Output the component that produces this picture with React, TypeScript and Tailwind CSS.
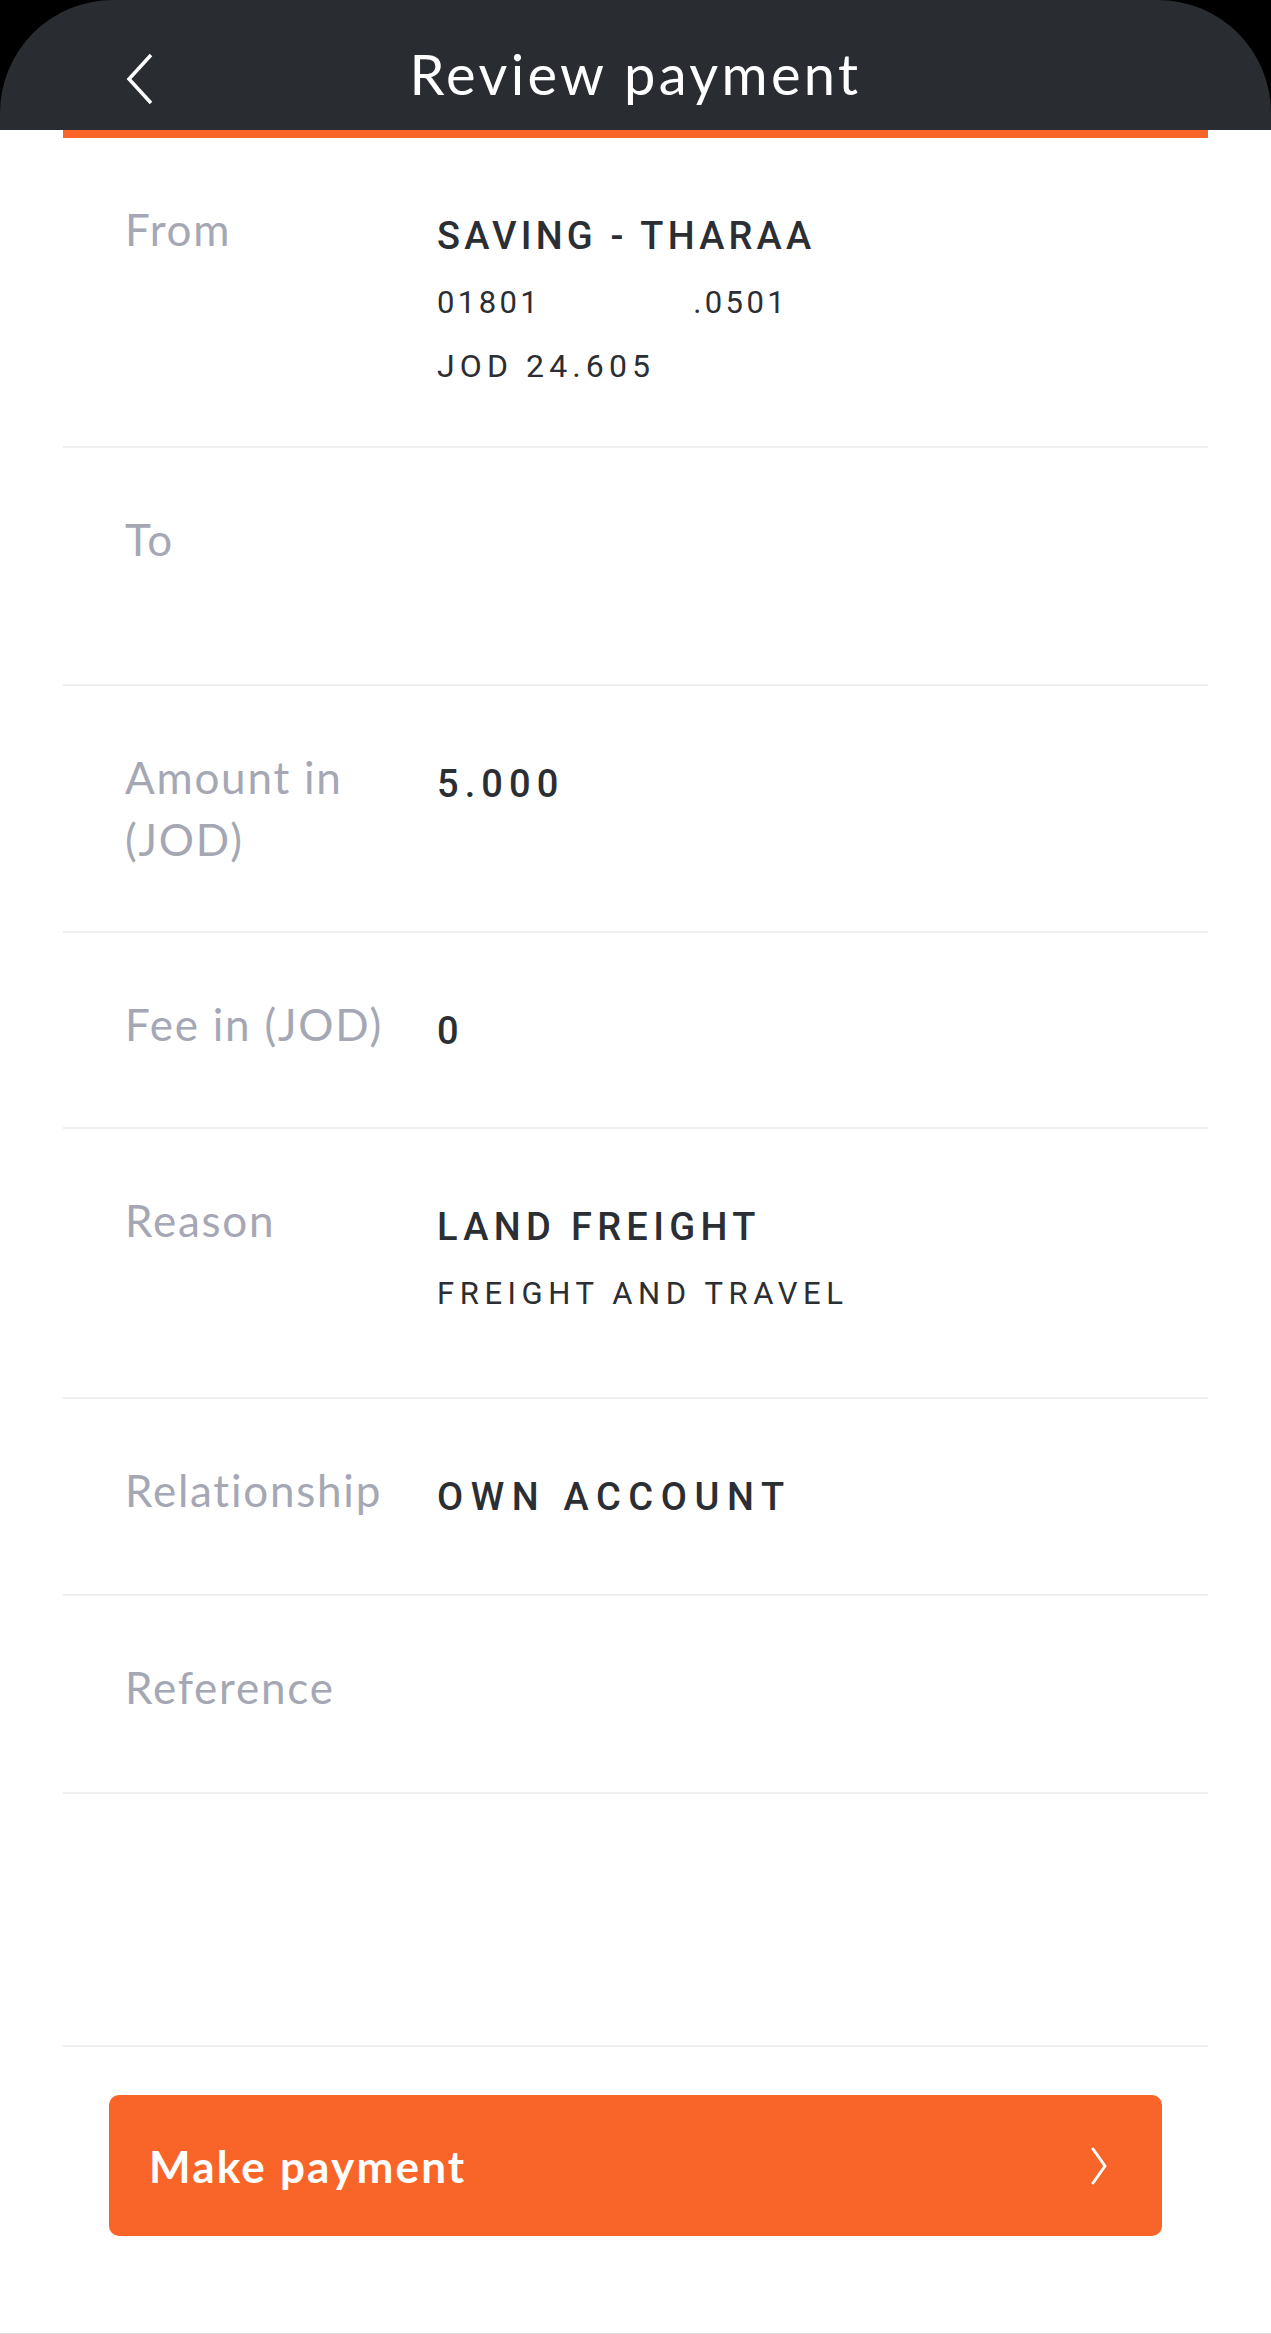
import React from "react";

const LABEL_FONT = { fontFamily: "Lato, 'Noto Sans', sans-serif" };
const VALUE_FONT = { fontFamily: "Roboto, 'Liberation Sans', sans-serif" };

function Row({
  label,
  heightClass,
  children,
}: {
  label: string;
  heightClass: string;
  children?: React.ReactNode;
}) {
  return (
    <div className={`mx-[63px] flex border-b-2 border-[#efeff2] pl-[62px] ${heightClass}`}>
      <div
        className="w-[312px] shrink-0 pr-[40px] pt-[60px] text-[44px] leading-[62px] tracking-[0.04em] text-[#a5a8b4]"
        style={LABEL_FONT}
      >
        {label}
      </div>
      <div className="flex flex-col pt-[67px] text-[#2b2e33]" style={VALUE_FONT}>
        {children}
      </div>
    </div>
  );
}

function Main({ children, trackingClass }: { children: React.ReactNode; trackingClass: string }) {
  return <div className={`text-[38px] font-medium leading-[62px] ${trackingClass}`}>{children}</div>;
}

function Sub({ children, trackingClass }: { children: React.ReactNode; trackingClass: string }) {
  return (
    <div className={`mt-[4px] text-[31px] font-normal leading-[64px] ${trackingClass}`}>{children}</div>
  );
}

export default function App() {
  return (
    <div className="flex h-[2334px] w-[1271px] flex-col overflow-hidden bg-black">
      <header className="relative grid h-[130px] shrink-0 grid-cols-[1fr_auto_1fr] items-start rounded-t-[113px] bg-[#292d31]">
        <div className="pl-[126px] pt-[53px]">
          <svg width="28" height="52" viewBox="0 0 28 52" fill="none">
            <path d="M25 2 L3 26 L25 50" stroke="#ffffff" strokeWidth="3.5" strokeLinejoin="miter" />
          </svg>
        </div>
        <h1
          className="pt-[46px] text-[56px] font-normal leading-[56px] tracking-[0.06em] text-white"
          style={LABEL_FONT}
        >
          Review payment
        </h1>
        <div />
      </header>

      <main className="flex flex-1 flex-col bg-white">
        <div className="mx-[63px] h-[8px] shrink-0 bg-[#f96529]" />

        <Row label="From" heightClass="h-[310px]">
          <Main trackingClass="tracking-[0.11em]">SAVING - THARAA</Main>
          <Sub trackingClass="tracking-[0.11em]">
            <span>01801</span>
            <span className="ml-[152px]">.0501</span>
          </Sub>
          <div className="text-[32px] font-normal leading-[62px] tracking-[0.16em]">JOD 24.605</div>
        </Row>

        <Row label="To" heightClass="h-[238px]" />

        <Row label="Amount in (JOD)" heightClass="h-[247px]">
          <Main trackingClass="tracking-[0.16em]">5.000</Main>
        </Row>

        <Row label="Fee in (JOD)" heightClass="h-[196px]">
          <Main trackingClass="tracking-[0.14em]">0</Main>
        </Row>

        <Row label="Reason" heightClass="h-[270px]">
          <Main trackingClass="tracking-[0.14em]">LAND FREIGHT</Main>
          <Sub trackingClass="tracking-[0.18em]">FREIGHT AND TRAVEL</Sub>
        </Row>

        <Row label="Relationship" heightClass="h-[197px]">
          <Main trackingClass="tracking-[0.2em]">OWN ACCOUNT</Main>
        </Row>

        <Row label="Reference" heightClass="h-[198px]" />

        <div className="flex-1" />

        <div className="mx-[63px] h-[2px] shrink-0 bg-[#efeff2]" />

        <div className="px-[109px] pb-[97px] pt-[48px]">
          <button
            className="flex h-[141px] w-full items-center justify-between rounded-[10px] bg-[#f96529] pl-[40px] pr-[54px] text-[44px] font-bold tracking-[0.05em] text-white"
            style={LABEL_FONT}
          >
            <span>Make payment</span>
            <svg width="18" height="38" viewBox="0 0 18 38" fill="none">
              <path d="M3 2 L15 19 L3 36" stroke="#ffffff" strokeWidth="3" strokeLinecap="round" strokeLinejoin="round" />
            </svg>
          </button>
        </div>
        <div className="h-[1px] shrink-0 bg-[#dedede]" />
      </main>
    </div>
  );
}
